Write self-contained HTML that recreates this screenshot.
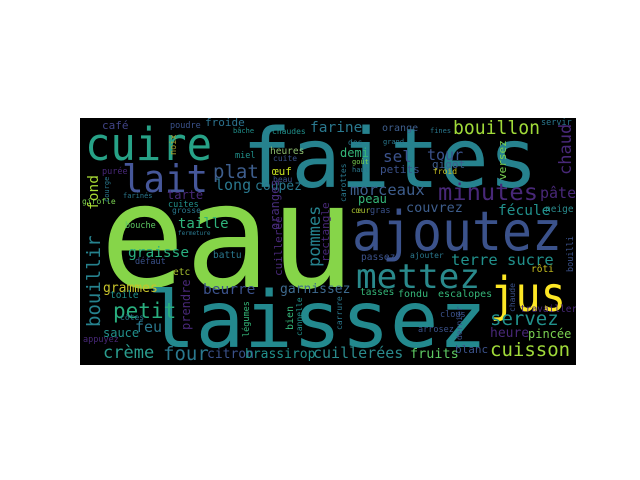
<!DOCTYPE html>
<html><head><meta charset="utf-8"><style>
html,body{margin:0;padding:0;background:#fff;width:640px;height:480px;overflow:hidden}
svg{display:block}
text{font-family:"DejaVu Sans Mono","Liberation Mono",monospace}
</style></head><body>
<svg width="640" height="480" viewBox="0 0 640 480" xmlns="http://www.w3.org/2000/svg">
<defs><clipPath id="c"><rect x="80" y="118" width="496" height="247"/></clipPath></defs>
<rect x="80" y="118" width="496" height="247" fill="#000"/>
<g clip-path="url(#c)">
<text x="100" y="287" font-size="145" fill="#86d549" textLength="255" lengthAdjust="spacingAndGlyphs">eau</text>
<text x="242" y="187" font-size="82" fill="#26828e" textLength="296" lengthAdjust="spacingAndGlyphs">faites</text>
<text x="147" y="347" font-size="78" fill="#23898e" textLength="340" lengthAdjust="spacingAndGlyphs">laissez</text>
<text x="352" y="250" font-size="54" fill="#3b528b" textLength="210" lengthAdjust="spacingAndGlyphs">ajoutez</text>
<text x="356" y="288" font-size="34" fill="#2a8a8c" textLength="124" lengthAdjust="spacingAndGlyphs">mettez</text>
<text x="490" y="311" font-size="48" fill="#fde725" textLength="76" lengthAdjust="spacingAndGlyphs">jus</text>
<text x="85" y="160" font-size="45" fill="#27a287" textLength="127" lengthAdjust="spacingAndGlyphs">cuire</text>
<text x="122" y="192" font-size="38" fill="#46579a" textLength="86" lengthAdjust="spacingAndGlyphs">lait</text>
<text x="453" y="134" font-size="19" fill="#a0da39" textLength="87" lengthAdjust="spacingAndGlyphs">bouillon</text>
<text x="438" y="200" font-size="23" fill="#482878" textLength="100" lengthAdjust="spacingAndGlyphs">minutes</text>
<text x="113" y="318" font-size="21" fill="#29af7f">petit</text>
<text x="490" y="325" font-size="19" fill="#21918c">servez</text>
<text x="490" y="356" font-size="19" fill="#a0da39">cuisson</text>
<text x="163" y="360" font-size="19" fill="#2a788e">four</text>
<text x="103" y="358" font-size="17" fill="#2a9d8e">crème</text>
<text x="313" y="358" font-size="15" fill="#2a8a8c">cuillerées</text>
<text x="213" y="178" font-size="19" fill="#3e5e8d">plat</text>
<text x="215" y="190" font-size="15" fill="#2a788e">long</text>
<text x="255" y="190" font-size="13" fill="#2a788e">coupez</text>
<text x="167" y="199" font-size="12" fill="#482878">tarte</text>
<text x="102" y="129" font-size="11" fill="#414487">café</text>
<text x="170" y="128" font-size="8.5" fill="#3b528b">poudre</text>
<text x="205" y="126" font-size="11" fill="#2c728e">froide</text>
<text x="233" y="133" font-size="7" fill="#21918c">bâche</text>
<text x="272" y="134" font-size="8" fill="#21918c">chaudes</text>
<text x="102" y="174" font-size="8.5" fill="#482878">purée</text>
<text x="272" y="175" font-size="11" fill="#c8e020">œuf</text>
<text x="270" y="154" font-size="9.5" fill="#8fbf6f">heures</text>
<text x="235" y="158" font-size="8.5" fill="#21918c">miel</text>
<text x="273" y="161" font-size="8" fill="#3b528b">cuite</text>
<text x="273" y="182" font-size="8" fill="#3b528b">beau</text>
<text x="82" y="204" font-size="8" fill="#7ad151">girofle</text>
<text x="123" y="198" font-size="7" fill="#2a788e">farinés</text>
<text x="168" y="207" font-size="8.5" fill="#21918c">cuites</text>
<text x="172" y="213" font-size="8" fill="#2a788e">grosse</text>
<text x="178" y="228" font-size="14" fill="#2fb47c">taille</text>
<text x="125" y="228" font-size="8.5" fill="#5ec962">bouche</text>
<text x="178" y="235" font-size="6" fill="#2a788e">fermeture</text>
<text x="128" y="257" font-size="14.5" fill="#29af7f">graisse</text>
<text x="135" y="264" font-size="8.5" fill="#3b528b">défaut</text>
<text x="213" y="258" font-size="9.5" fill="#2a788e">battu</text>
<text x="173" y="275" font-size="9.5" fill="#a8c030">etc</text>
<text x="103" y="292" font-size="13" fill="#c7c32b">grammes</text>
<text x="110" y="298" font-size="9.5" fill="#21918c">toile</text>
<text x="203" y="294" font-size="14.5" fill="#3b528b">beurre</text>
<text x="280" y="293" font-size="13" fill="#3e6a8e">garnissez</text>
<text x="135" y="332" font-size="15" fill="#2a788e">feu</text>
<text x="103" y="337" font-size="12" fill="#21918c">sauce</text>
<text x="120" y="320" font-size="8" fill="#2a788e">côtes</text>
<text x="83" y="342" font-size="8.5" fill="#482878">appuyez</text>
<text x="207" y="358" font-size="13" fill="#3b528b">citron</text>
<text x="245" y="358" font-size="13" fill="#21918c">brassirop</text>
<text x="310" y="132" font-size="14.5" fill="#2a788e">farine</text>
<text x="382" y="131" font-size="10" fill="#3e5e8d">orange</text>
<text x="430" y="133" font-size="7" fill="#2a788e">fines</text>
<text x="541" y="125" font-size="8.5" fill="#2a788e">servir</text>
<text x="348" y="145" font-size="8" fill="#2a788e">dos</text>
<text x="383" y="144" font-size="7" fill="#2a788e">grand</text>
<text x="340" y="157" font-size="12" fill="#35b779">demi</text>
<text x="383" y="162" font-size="16" fill="#3b528b">sel</text>
<text x="427" y="160" font-size="15" fill="#3b528b">tour</text>
<text x="432" y="168" font-size="11" fill="#3e5e8d">gigot</text>
<text x="433" y="174" font-size="8" fill="#c8c020">froid</text>
<text x="380" y="173" font-size="11" fill="#3b528b">petits</text>
<text x="352" y="164" font-size="7" fill="#7ad151">goût</text>
<text x="352" y="172" font-size="7" fill="#2a788e">haut</text>
<text x="350" y="195" font-size="15.5" fill="#3e5e8d">morceaux</text>
<text x="540" y="198" font-size="15" fill="#482878">pâte</text>
<text x="358" y="203" font-size="12" fill="#35b779">peau</text>
<text x="406" y="212" font-size="13.5" fill="#3e5e8d">couvrez</text>
<text x="370" y="213" font-size="8.5" fill="#3b528b">gras</text>
<text x="351" y="213" font-size="8" fill="#a8c030">cœur</text>
<text x="498" y="215" font-size="14.5" fill="#21918c">fécule</text>
<text x="545" y="212" font-size="9.5" fill="#2a8a8c">neige</text>
<text x="361" y="260" font-size="9.5" fill="#3b528b">passez</text>
<text x="410" y="258" font-size="8" fill="#2a788e">ajouter</text>
<text x="451" y="265" font-size="15.5" fill="#21918c">terre sucre</text>
<text x="531" y="272" font-size="9.5" fill="#c8c020">rôti</text>
<text x="360" y="295" font-size="9.5" fill="#35b779">tasses</text>
<text x="398" y="297" font-size="10" fill="#35b779">fondu</text>
<text x="438" y="297" font-size="10" fill="#35b779">escalopes</text>
<text x="520" y="312" font-size="9.5" fill="#482878">travailler</text>
<text x="440" y="317" font-size="8.5" fill="#3b528b">clous</text>
<text x="418" y="332" font-size="8.5" fill="#3b528b">arrosez</text>
<text x="490" y="337" font-size="13" fill="#482878">heure</text>
<text x="528" y="338" font-size="12" fill="#7ad151">pincée</text>
<text x="455" y="353" font-size="11" fill="#3b528b">blanc</text>
<text x="410" y="358" font-size="13.5" fill="#5ec962">fruits</text>
<text transform="translate(98,210) rotate(-90)" font-size="14.5" fill="#a8db34">fond</text>
<text transform="translate(100,327) rotate(-90)" font-size="19" fill="#26828e">bouillir</text>
<text transform="translate(109,202) rotate(-90)" font-size="7" fill="#2a788e">courge</text>
<text transform="translate(176,155) rotate(-90)" font-size="8.5" fill="#a8a030">noix</text>
<text transform="translate(279,230) rotate(-90)" font-size="12" fill="#472d7b">oranges</text>
<text transform="translate(320,267) rotate(-90)" font-size="17" fill="#26828e">pommes</text>
<text transform="translate(329,262) rotate(-90)" font-size="11" fill="#482878">rectangle</text>
<text transform="translate(282,276) rotate(-90)" font-size="11" fill="#482878">cuillerée</text>
<text transform="translate(190,330) rotate(-90)" font-size="12" fill="#482878">prendre</text>
<text transform="translate(293,330) rotate(-90)" font-size="10" fill="#35b779">bien</text>
<text transform="translate(249,337) rotate(-90)" font-size="8.5" fill="#35b779">légumes</text>
<text transform="translate(302,336) rotate(-90)" font-size="8" fill="#21918c">cannelle</text>
<text transform="translate(342,330) rotate(-90)" font-size="8" fill="#2a788e">carrure</text>
<text transform="translate(506,180) rotate(-90)" font-size="11" fill="#7ad151">versez</text>
<text transform="translate(571,175) rotate(-90)" font-size="17" fill="#482878">chaud</text>
<text transform="translate(346,202) rotate(-90)" font-size="8" fill="#2a788e">carottes</text>
<text transform="translate(573,272) rotate(-90)" font-size="8.5" fill="#3b528b">bouilli</text>
<text transform="translate(515,312) rotate(-90)" font-size="8" fill="#3b528b">chaude</text>
<text transform="translate(462,340) rotate(-90)" font-size="8" fill="#3b528b">dernier</text>
</g>
</svg>
</body></html>
